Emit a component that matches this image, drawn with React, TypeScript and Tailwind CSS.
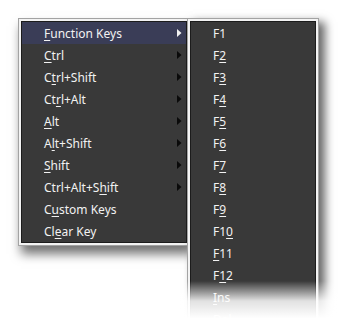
import React from 'react';

type Item = { pre: string; key: string; post: string; sub?: boolean; active?: boolean };

const mainItems: Item[] = [
  { pre: '', key: 'F', post: 'unction Keys', sub: true, active: true },
  { pre: '', key: 'C', post: 'trl', sub: true },
  { pre: 'C', key: 't', post: 'rl+Shift', sub: true },
  { pre: 'Ct', key: 'r', post: 'l+Alt', sub: true },
  { pre: '', key: 'A', post: 'lt', sub: true },
  { pre: 'A', key: 'l', post: 't+Shift', sub: true },
  { pre: '', key: 'S', post: 'hift', sub: true },
  { pre: 'Ctrl+Alt+S', key: 'h', post: 'ift', sub: true },
  { pre: 'C', key: 'u', post: 'stom Keys' },
  { pre: 'Cl', key: 'e', post: 'ar Key' },
];

const fnItems: Item[] = [
  { pre: 'F1', key: '', post: '' },
  { pre: 'F', key: '2', post: '' },
  { pre: 'F', key: '3', post: '' },
  { pre: 'F', key: '4', post: '' },
  { pre: 'F', key: '5', post: '' },
  { pre: 'F', key: '6', post: '' },
  { pre: 'F', key: '7', post: '' },
  { pre: 'F', key: '8', post: '' },
  { pre: 'F', key: '9', post: '' },
  { pre: 'F1', key: '0', post: '' },
  { pre: '', key: 'F', post: '11' },
  { pre: 'F', key: '1', post: '2' },
  { pre: '', key: 'I', post: 'ns' },
  { pre: '', key: 'D', post: 'el' },
];

const Label = ({ item }: { item: Item }) => (
  <span className="whitespace-pre">
    {item.pre}
    {item.key && <u className="underline-offset-2 decoration-1">{item.key}</u>}
    {item.post}
  </span>
);

const Frame = ({ children, className }: { children: React.ReactNode; className: string }) => (
  <div className={`border border-[#a3a3a3] ${className}`}>
    <div className="border-2 border-[#f3f3f3]">
      <div className="border border-[#1c1c1c] bg-[#393939]">{children}</div>
    </div>
  </div>
);

export default function App() {
  return (
    <div
      className="relative h-[331px] w-[339px] overflow-hidden bg-white text-[12px] text-[#f2f2f2]"
      style={{ fontFamily: '"Noto Sans", "Open Sans", sans-serif' }}
    >
      <div className="flex items-start pl-[18px] pt-[18px]">
        <Frame className="relative z-0 w-[172px] shadow-[3px_8px_10px_rgba(0,0,0,0.55)]">
          {mainItems.map((it, i) => (
            <div
              key={i}
              className={`flex h-[22px] items-center justify-between pl-[22px] pr-[4px] pt-px ${
                it.active ? 'bg-[#3a3d57]' : ''
              }`}
            >
              <Label item={it} />
              {it.sub && (
                <svg width="5" height="8" viewBox="0 0 5 8" className="-mt-px">
                  <polygon points="0,0 4.5,4 0,8" fill={it.active ? '#f2f2f2' : '#0a0a0a'} />
                </svg>
              )}
            </div>
          ))}
        </Frame>
        <Frame className="relative z-10 -ml-[3px] w-[132px] shadow-[6px_4px_9px_rgba(0,0,0,0.6)]">
          {fnItems.map((it, i) => (
            <div key={i} className="flex h-[22px] items-center pl-[22px] pt-px">
              <Label item={it} />
            </div>
          ))}
        </Frame>
      </div>
      <div className="absolute inset-x-0 bottom-0 z-20 h-[50px] bg-[linear-gradient(to_bottom,rgba(255,255,255,0)_0%,rgba(255,255,255,0.85)_40%,#ffffff_75%)]" />
    </div>
  );
}
